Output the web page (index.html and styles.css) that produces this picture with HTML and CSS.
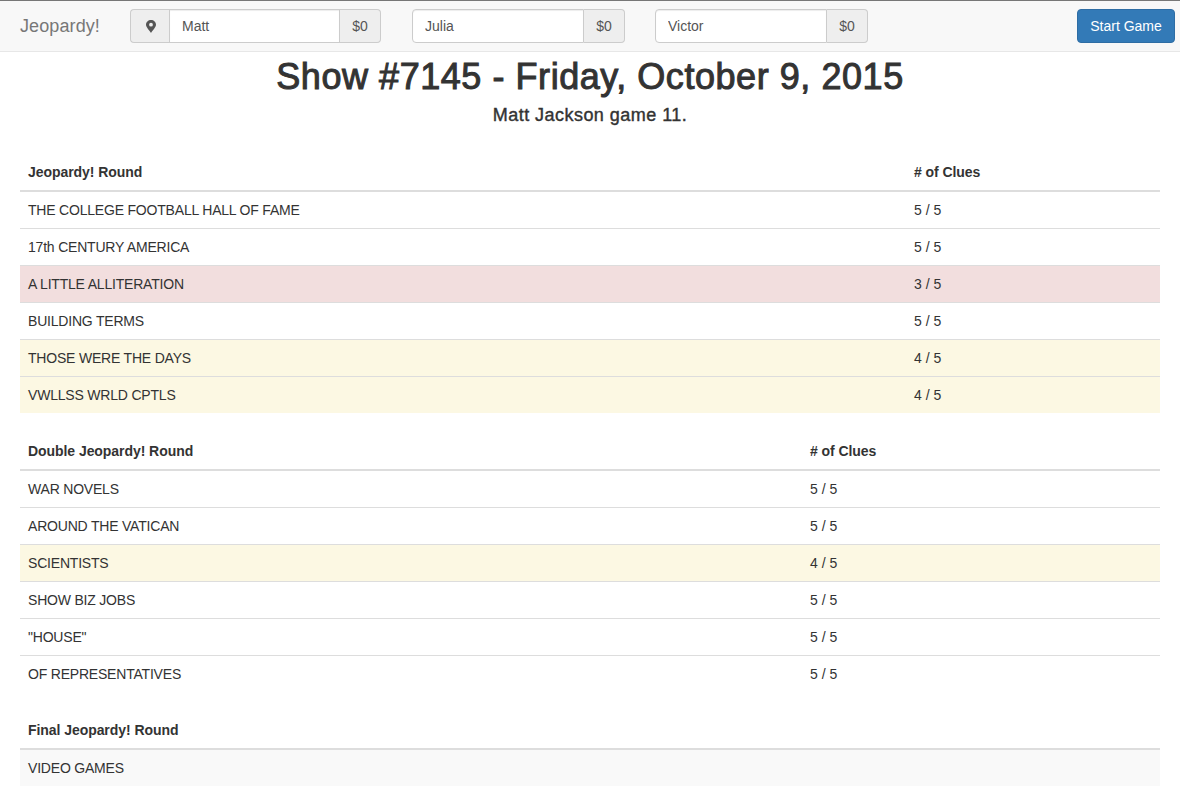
FILE: index.html
```html
<!DOCTYPE html>
<html lang="en">
<head>
<meta charset="utf-8">
<title>Jeopardy!</title>
<link rel="stylesheet" href="styles.css">
</head>
<body>
<nav class="navbar">
  <span class="brand">Jeopardy!</span>
  <div class="players">
    <div class="input-group first">
      <span class="addon addon-icon">
        <svg class="pin" viewBox="0 0 12 16" width="12" height="16"><path fill-rule="evenodd" d="M6 2C3.200 2 1 4.100 1 6.800 1 9.300 4.600 12.600 6 15 7.400 12.600 11 9.300 11 6.800 11 4.100 8.800 2 6 2ZM6 4.800A1.900 1.900 0 1 1 6 8.600 1.900 1.900 0 1 1 6 4.800Z"/></svg>
      </span>
      <input class="player" type="text" value="Matt">
      <span class="addon addon-score">$0</span>
    </div>
    <div class="input-group">
      <input class="player" type="text" value="Julia">
      <span class="addon addon-score">$0</span>
    </div>
    <div class="input-group">
      <input class="player" type="text" value="Victor">
      <span class="addon addon-score">$0</span>
    </div>
  </div>
  <button class="btn-start" type="button">Start Game</button>
</nav>
<main class="container">
  <h1 class="title">Show #7145 - Friday, October 9, 2015</h1>
  <h4 class="subtitle">Matt Jackson game 11.</h4>

  <table class="table round-one">
    <thead><tr><th class="col-name">Jeopardy! Round</th><th># of Clues</th></tr></thead>
    <tbody>
      <tr><td>THE COLLEGE FOOTBALL HALL OF FAME</td><td>5 / 5</td></tr>
      <tr><td>17th CENTURY AMERICA</td><td>5 / 5</td></tr>
      <tr class="danger"><td>A LITTLE ALLITERATION</td><td>3 / 5</td></tr>
      <tr><td>BUILDING TERMS</td><td>5 / 5</td></tr>
      <tr class="warning"><td>THOSE WERE THE DAYS</td><td>4 / 5</td></tr>
      <tr class="warning"><td>VWLLSS WRLD CPTLS</td><td>4 / 5</td></tr>
    </tbody>
  </table>

  <table class="table round-two">
    <thead><tr><th class="col-name">Double Jeopardy! Round</th><th># of Clues</th></tr></thead>
    <tbody>
      <tr><td>WAR NOVELS</td><td>5 / 5</td></tr>
      <tr><td>AROUND THE VATICAN</td><td>5 / 5</td></tr>
      <tr class="warning"><td>SCIENTISTS</td><td>4 / 5</td></tr>
      <tr><td>SHOW BIZ JOBS</td><td>5 / 5</td></tr>
      <tr><td>"HOUSE"</td><td>5 / 5</td></tr>
      <tr><td>OF REPRESENTATIVES</td><td>5 / 5</td></tr>
    </tbody>
  </table>

  <table class="table round-final">
    <thead><tr><th>Final Jeopardy! Round</th></tr></thead>
    <tbody>
      <tr class="muted"><td>VIDEO GAMES</td></tr>
    </tbody>
  </table>
</main>
</body>
</html>
```

FILE: styles.css
```css
* { box-sizing: border-box; }
html, body { margin: 0; padding: 0; }
body {
  font-family: "Liberation Sans", Arial, sans-serif;
  font-size: 14px;
  line-height: 20px;
  color: #333;
  background: #fff;
  border-top: 1px solid #777;
}
.navbar {
  display: flex;
  align-items: center;
  height: 51px;
  padding: 0 5px 0 20px;
  background: #f8f8f8;
  border-bottom: 1px solid #e7e7e7;
}
.brand {
  width: 110px;
  font-size: 18px;
  letter-spacing: 0.1px;
  color: #777;
}
.players { display: flex; gap: 30px; flex: 1; }
.input-group {
  display: flex;
  width: 213px;
  height: 34px;
}
.input-group.first { width: 251px; margin-right: 1px; }
.addon {
  display: flex;
  align-items: center;
  justify-content: center;
  background: #eee;
  border: 1px solid #ccc;
  color: #555;
}
.addon-icon {
  width: 39px;
  padding-left: 2px;
  border-right: 0;
  border-radius: 4px 0 0 4px;
}
.addon-score {
  width: 41px;
  border-left: 0;
  border-radius: 0 4px 4px 0;
}
.pin { fill: #555; display: block; }
.player {
  flex: 1;
  min-width: 0;
  padding: 6px 12px;
  font: inherit;
  color: #555;
  background: #fff;
  border: 1px solid #ccc;
  border-radius: 0;
  outline: 0;
  box-shadow: inset 0 1px 1px rgba(0,0,0,.075);
}
.input-group > .player:first-child { border-radius: 4px 0 0 4px; }
.btn-start {
  width: 98px;
  height: 34px;
  padding: 0;
  font: inherit;
  color: #fff;
  background: #337ab7;
  border: 1px solid #2e6da4;
  border-radius: 4px;
}
.container { padding: 0 20px; }
.title {
  margin: 5px 0 0;
  font-size: 36px;
  line-height: 40px;
  font-weight: 400;
  letter-spacing: 0.55px;
  -webkit-text-stroke: 1px #333;
  text-align: center;
}
.subtitle {
  margin: 8px 0 29px;
  font-size: 18px;
  line-height: 20px;
  font-weight: 400;
  letter-spacing: 0.46px;
  -webkit-text-stroke: 0.4px #333;
  text-align: center;
}
.table {
  width: 100%;
  margin-bottom: 20px;
  border-collapse: collapse;
  border-spacing: 0;
  table-layout: fixed;
}
.table th, .table td {
  padding: 8px;
  text-align: left;
  vertical-align: top;
}
.table th { border-bottom: 2px solid #ddd; font-weight: 700; letter-spacing: -0.06px; }
.table td { border-top: 1px solid #ddd; }
.table td:first-child { letter-spacing: -0.2px; }
.round-one .col-name { width: 886px; }
.round-two .col-name { width: 782px; }
.danger td { background: #f2dede; }
.warning td { background: #fcf8e3; }
.muted td { background: #f9f9f9; }
```
